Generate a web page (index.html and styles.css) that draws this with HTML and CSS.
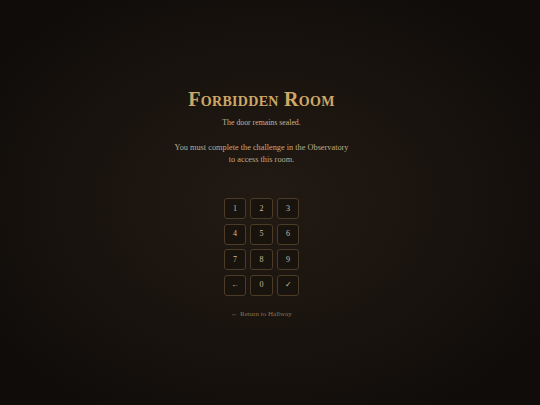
FILE: index.html
```html
<!DOCTYPE html>
<html lang="en">
<head>
<meta charset="utf-8">
<title>Forbidden Room</title>
<link rel="stylesheet" href="styles.css">
</head>
<body>
<main class="room">
  <h1 class="title">Forbidden Room</h1>
  <p class="lead">The door remains sealed.</p>
  <p class="note">You must complete the challenge in the Observatory<br>to access this room.</p>
  <div class="keypad">
    <button class="key">1</button>
    <button class="key">2</button>
    <button class="key">3</button>
    <button class="key">4</button>
    <button class="key">5</button>
    <button class="key">6</button>
    <button class="key">7</button>
    <button class="key">8</button>
    <button class="key">9</button>
    <button class="key">&larr;</button>
    <button class="key">0</button>
    <button class="key">&#10003;</button>
  </div>
  <a class="back" href="#">&larr; Return to Hallway</a>
</main>
</body>
</html>
```
FILE: styles.css
```css
html, body {
  margin: 0;
  height: 100%;
}
body {
  background: radial-gradient(ellipse 62% 62% at 49% 50%, #221a13 0%, #1a140f 50%, #0f0c0a 100%);
  font-family: "Liberation Serif", "DejaVu Serif", serif;
  color: #c8b593;
}
.room {
  box-sizing: border-box;
  height: 100%;
  padding: 0 17px 0 0;
  display: flex;
  flex-direction: column;
  align-items: center;
  justify-content: center;
  text-align: center;
}
.title {
  margin: 0 0 6px;
  font-size: 20px;
  font-weight: bold;
  font-variant: small-caps;
  letter-spacing: 0.3px;
  color: #cfa766;
  line-height: 24px;
}
.lead {
  margin: 0 0 13px;
  font-size: 7.8px;
  line-height: 12px;
  color: #c4b499;
}
.note {
  margin: 0 0 32px;
  font-size: 8.3px;
  line-height: 12px;
  color: #bcab8f;
}
.keypad {
  display: grid;
  grid-template-columns: repeat(3, 22.5px);
  grid-auto-rows: 21px;
  column-gap: 4px;
  row-gap: 4.5px;
  margin-bottom: 14px;
}
.key {
  box-sizing: border-box;
  padding: 0;
  margin: 0;
  border: 1px solid #4b3b27;
  border-radius: 3px;
  background: #19130e;
  color: #cbbb9c;
  font-family: "Liberation Serif", serif;
  font-size: 8px;
  line-height: 1;
}
.back {
  font-size: 7px;
  color: #8c7350;
  text-decoration: none;
}
```
